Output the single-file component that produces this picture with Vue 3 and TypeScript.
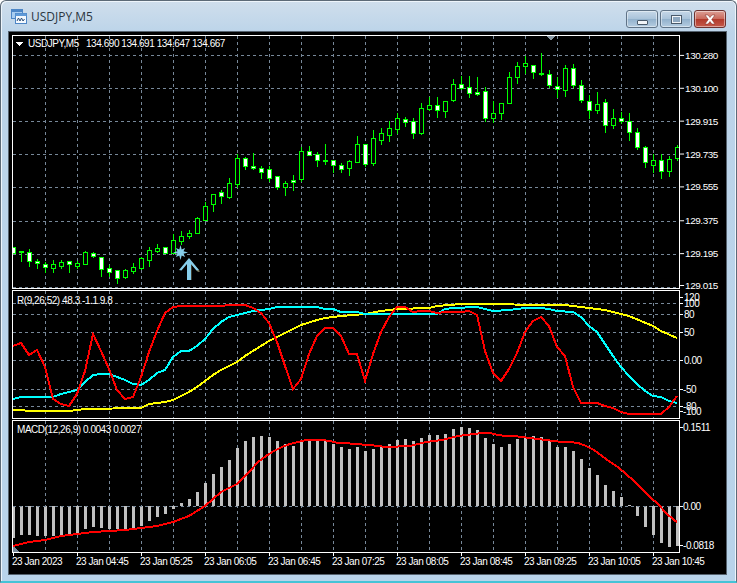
<template>
  <div class="window">
    <div class="titlebar">
      <svg class="app-icon" width="16" height="15" viewBox="0 0 16 15">
        <rect x="0.5" y="0.5" width="11" height="9" fill="#a9cdf0" stroke="#4d86c6" />
        <rect x="0.5" y="0.5" width="11" height="2.5" fill="#4d86c6" />
        <rect x="4.5" y="4.5" width="11" height="10" fill="#f4f9fe" stroke="#4d86c6" />
        <rect x="4.5" y="4.5" width="11" height="2.5" fill="#5f9ad8" />
        <path d="M6 12l1.5-3 1.5 3 1.5-3 1.5 3 1.5-2" fill="none" stroke="#2c4f78" />
      </svg>
      <span class="title">USDJPY,M5</span>
      <div class="buttons">
        <div class="btn">
          <span class="min-glyph"></span>
        </div>
        <div class="btn">
          <span class="max-glyph"></span>
        </div>
        <div class="btn btn-close">
          <svg width="14" height="11" viewBox="0 0 14 11">
            <path d="M2 1h3l2 2.5L9 1h3L8.7 5.5 12 10H9L7 7.5 5 10H2l3.3-4.5z" fill="#fff" stroke="#7d2a22" stroke-width="0.5" />
          </svg>
        </div>
      </div>
    </div>

    <div class="client">
      <!-- price pane -->
      <div class="pane pane-main">
        <svg class="plot" viewBox="13 36 666 252" shape-rendering="crispEdges">
          <line v-for="x in gridX" :key="x" :x1="x + 0.5" :x2="x + 0.5" y1="36" y2="288" class="grid" />
          <line v-for="y in priceGrid" :key="y" x1="13" x2="679" :y1="y + 0.5" :y2="y + 0.5" class="grid" />
          <g v-for="c in candleRows" :key="c.x">
            <line :x1="c.x + 0.5" :x2="c.x + 0.5" :y1="c.wickTop" :y2="c.wickBot" class="wick" />
            <rect
              :x="c.x - 1.5"
              :y="c.top + 0.5"
              width="4"
              :height="c.bot - c.top"
              :fill="c.filled ? '#fff' : '#000'"
              stroke="#00ff00"
            />
          </g>
          <text x="4" y="0" class="hidden"></text>
          <polygon points="16,42 23,42 19.5,46" fill="#fff" transform="translate(0 0)" />
          <text x="28" y="47" class="label">USDJPY,M5</text>
          <text x="86" y="47" class="label">134.690 134.691 134.647 134.667</text>
          <polygon points="546.5,36 555.5,36 551,41" fill="#8b9aa6" />
          <g shape-rendering="auto">
            <polygon :points="starPoints" fill="#87ceeb" />
            <path d="M190 259.5L200 271.5 198 272 191.5 264.5V280H190z" fill="#7d7a5c" />
            <path d="M189 258L199 270 196.5 270.5 191 264V280H187V264L181.5 270.5 179 270z" fill="#87ceeb" />
          </g>
        </svg>
        <svg class="axis" viewBox="680 35 46 255">
          <g v-for="t in priceTicks" :key="t.text">
            <line x1="680" x2="684" :y1="t.y + 0.5" :y2="t.y + 0.5" class="tick" />
            <text x="685" :y="t.y + 4" class="label">{{ t.text }}</text>
          </g>
        </svg>
      </div>

      <!-- oscillator pane -->
      <div class="pane pane-rsi">
        <svg class="plot" viewBox="13 292 666 127" shape-rendering="crispEdges">
          <line v-for="x in gridX" :key="x" :x1="x + 0.5" :x2="x + 0.5" y1="292" y2="419" class="grid" />
          <line v-for="y in rsiGrid" :key="y" x1="13" x2="679" :y1="y + 0.5" :y2="y + 0.5" class="grid" />
          <polyline :points="yellowLine" class="line yellow" />
          <polyline :points="cyanLine" class="line cyan" />
          <polyline :points="redLine" class="line red" />
          <text x="17" y="305" class="label">R(9,26,52) 48.3 -1.1 9.8</text>
        </svg>
        <svg class="axis" viewBox="680 291 46 129">
          <g v-for="t in rsiTicks" :key="t.text">
            <line x1="680" x2="683" :y1="t.line + 0.5" :y2="t.line + 0.5" class="tick" />
            <text :x="t.x" :y="t.y + 4" class="label">{{ t.text }}</text>
          </g>
        </svg>
      </div>

      <!-- histogram pane -->
      <div class="pane pane-macd">
        <svg class="plot" viewBox="13 422 666 131" shape-rendering="crispEdges">
          <line v-for="x in gridX" :key="x" :x1="x + 0.5" :x2="x + 0.5" y1="422" y2="553" class="grid" />
          <rect
            v-for="b in macdBars"
            :key="b.x"
            :x="b.x - 1"
            :y="b.y"
            width="3"
            :height="b.h"
            fill="#c0c0c0"
          />
          <line x1="13" x2="679" y1="507.5" y2="507.5" class="grid" />
          <polygon points="13,547 13,553 19,553" fill="#778899" />
          <polyline :points="signalLine" class="line red" />
          <text x="17" y="434" class="label">MACD(12,26,9) 0.0043 0.0027</text>
        </svg>
        <svg class="axis" viewBox="680 421 46 133">
          <g v-for="t in macdTicks" :key="t.text">
            <line x1="680" x2="683" :y1="t.y + 0.5" :y2="t.y + 0.5" class="tick" />
            <text x="683" :y="t.y + 4" class="label">{{ t.text }}</text>
          </g>
        </svg>
      </div>

      <!-- time scale -->
      <svg class="time-axis" viewBox="9 554 717 20">
        <g v-for="(t, i) in timeLabels" :key="t">
          <line :x1="13 + i * 64 + 0.5" :x2="13 + i * 64 + 0.5" y1="554" y2="557" class="tick" />
          <text :x="12 + i * 64" y="566" class="label">23 Jan {{ t }}</text>
        </g>
      </svg>
    </div>
  </div>
</template>

<script setup lang="ts">
import { computed } from 'vue'

// one candle every 8px starting at x=13: bodyTop, bodyBottom, wickTop, wickBottom, filled
const candles: [number, number, number, number, number][] = [
  [247, 253, 247, 253, 1], [251, 252, 251, 261, 1], [252, 261, 249, 266, 1], [261, 263, 259, 268, 1],
  [264, 267, 262, 272, 1], [264, 268, 260, 272, 0], [262, 266, 260, 268, 0], [261, 264, 261, 272, 1],
  [263, 266, 261, 268, 0], [252, 264, 251, 264, 0], [253, 256, 252, 257, 1], [257, 269, 257, 276, 1],
  [268, 272, 265, 276, 1], [270, 278, 270, 283, 1], [270, 277, 269, 278, 0], [267, 271, 263, 273, 0],
  [258, 268, 257, 269, 0], [250, 260, 247, 266, 0], [248, 251, 244, 252, 0], [247, 253, 247, 253, 1],
  [240, 253, 234, 253, 0], [236, 241, 231, 244, 0], [233, 236, 230, 238, 0], [218, 233, 217, 233, 0],
  [206, 220, 202, 220, 0], [194, 204, 194, 211, 0], [192, 196, 190, 203, 1], [183, 197, 178, 198, 0],
  [158, 184, 154, 187, 0], [158, 166, 157, 169, 1], [166, 168, 153, 169, 1], [168, 172, 166, 178, 1],
  [169, 178, 166, 181, 1], [176, 187, 176, 189, 1], [183, 187, 181, 195, 0], [180, 182, 175, 190, 1],
  [151, 179, 147, 181, 0], [151, 155, 146, 155, 1], [154, 160, 152, 166, 1], [160, 161, 144, 164, 1],
  [160, 165, 160, 172, 1], [165, 169, 163, 172, 1], [161, 168, 160, 175, 0], [144, 162, 136, 162, 0],
  [144, 164, 144, 166, 1], [138, 163, 130, 165, 0], [133, 140, 128, 144, 0], [128, 135, 121, 141, 0],
  [118, 129, 113, 133, 0], [119, 122, 117, 126, 1], [121, 133, 118, 138, 1], [108, 133, 103, 134, 0],
  [105, 109, 97, 110, 0], [105, 110, 97, 117, 1], [101, 111, 101, 117, 0], [84, 100, 79, 101, 0],
  [84, 88, 76, 89, 1], [87, 93, 76, 97, 1], [92, 94, 77, 95, 1], [91, 118, 87, 121, 1],
  [113, 118, 101, 122, 0], [103, 113, 103, 119, 0], [77, 103, 72, 103, 0], [66, 77, 62, 83, 0],
  [63, 66, 56, 73, 0], [65, 72, 65, 78, 1], [73, 74, 53, 75, 1], [74, 85, 70, 87, 1],
  [86, 89, 77, 97, 1], [68, 90, 65, 96, 0], [68, 85, 64, 87, 1], [85, 100, 80, 102, 1],
  [101, 110, 95, 118, 1], [104, 110, 92, 113, 0], [102, 125, 99, 132, 1], [118, 125, 109, 128, 0],
  [118, 121, 112, 123, 1], [121, 132, 113, 140, 1], [132, 147, 128, 149, 1], [147, 162, 146, 167, 1],
  [160, 165, 154, 172, 0], [160, 171, 154, 178, 1], [159, 171, 156, 176, 0], [147, 158, 145, 160, 0],
]

const candleRows = computed(() =>
  candles.map((c, i) => ({
    x: 13 + i * 8,
    top: c[0],
    bot: c[1],
    wickTop: c[2],
    wickBot: c[3] + 1,
    filled: c[4] === 1,
  })),
)

const gridX = Array.from({ length: 20 }, (_, i) => 45 + i * 32)
const priceGrid = [55, 88, 121, 154, 187, 221, 254, 287]
const rsiGrid = [304, 315, 333, 361, 390, 407]

const priceTicks = [
  { text: '130.280', y: 55 },
  { text: '130.100', y: 88 },
  { text: '129.915', y: 121 },
  { text: '129.735', y: 154 },
  { text: '129.555', y: 187 },
  { text: '129.375', y: 221 },
  { text: '129.195', y: 254 },
  { text: '129.015', y: 286 },
]

const rsiTicks = [
  { text: '120', x: 684, y: 298, line: 298 },
  { text: '100', x: 684, y: 304, line: 304 },
  { text: '80', x: 684, y: 315, line: 315 },
  { text: '50', x: 684, y: 333, line: 333 },
  { text: '0.00', x: 684, y: 361, line: 361 },
  { text: '-50', x: 683, y: 390, line: 390 },
  { text: '-80', x: 683, y: 407, line: 407 },
  { text: '-100', x: 683, y: 412, line: 412 },
]

const macdTicks = [
  { text: '0.1511', y: 428 },
  { text: '0.00', y: 507 },
  { text: '-0.0818', y: 546 },
]

const timeLabels = ['2023', '04:45', '05:25', '06:05', '06:45', '07:25', '08:05', '08:45', '09:25', '10:05', '10:45']

const redLine =
  '13,347 21,344 29,356 37,351 45,368 53,400 61,405 69,407 77,395 85,372 93,335 101,352 109,370 117,391 125,400 133,398 141,378 149,353 157,332 165,314 173,308 181,307 221,307 229,306 245,306 253,309 261,314 269,324 277,343 285,367 293,390 301,380 309,355 317,337 325,329 333,329 341,337 349,355 357,355 365,382 373,355 381,333 389,318 397,308 405,308 413,313 421,312 429,312 437,314 445,313 461,313 469,312 477,316 485,352 493,374 501,382 509,370 517,354 525,333 533,322 541,318 549,327 557,348 565,357 573,388 581,404 597,404 605,407 613,409 621,413 629,415 661,415 669,408 677,397'
const cyanLine =
  '13,400 21,398 53,398 61,395 69,393 77,391 85,383 93,376 101,375 109,375 117,378 125,381 133,385 141,386 149,381 157,374 165,371 173,358 181,352 189,352 197,347 205,340 213,330 221,323 229,318 237,316 245,314 253,312 269,310 277,308 309,308 317,308 325,310 333,310 341,313 357,313 365,315 437,315 445,310 453,309 477,308 485,310 493,312 509,311 517,310 525,309 541,309 549,310 557,312 573,313 581,318 589,327 597,333 605,345 613,357 621,368 629,377 637,385 645,392 653,397 661,398 669,402 677,404'
const yellowLine =
  '13,411 37,412 69,412 77,411 85,410 141,409 149,405 165,403 173,401 189,393 197,388 205,382 213,376 221,371 229,367 237,363 245,357 253,352 269,342 285,334 301,326 317,321 325,319 341,317 365,315 381,312 397,310 429,309 437,307 461,305 565,306 581,308 605,311 629,317 653,327 661,332 677,339'
const signalLine =
  '13,547 29,543 45,541 61,537 77,535 93,533 109,532 125,531 141,529 157,527 173,523 189,517 205,507 221,493 237,485 250,472 258,463 266,457 274,452 282,448 290,445 298,443 306,441 322,441 330,442 338,444 346,444 354,445 370,446 378,447 386,448 394,448 402,447 410,447 418,445 426,443 434,442 442,441 450,439 458,437 466,436 474,435 482,434 490,434 498,436 506,437 514,437 522,438 530,439 538,440 546,441 554,442 562,443 570,443 578,444 586,447 594,451 602,457 610,463 618,468 626,475 634,482 642,490 650,498 658,505 666,514 674,521 677,523'

// top of each bar (or bottom when under the zero line), 8px apart from x=13
const macdEnds = [
  539, 536, 536, 537, 537, 537, 536, 535, 534, 530, 528, 529, 530, 530, 530, 529, 527, 522, 518, 515, 510,
  504, 500, 493, 484, 475, 468, 461, 449, 442, 438, 437, 438, 442, 445, 447, 442, 440, 442, 442, 445, 448,
  450, 448, 452, 450, 448, 445, 441, 440, 442, 439, 436, 436, 435, 430, 428, 429, 431, 439, 445, 448, 445,
  440, 438, 437, 438, 442, 448, 448, 452, 460, 469, 476, 486, 492, 498, 506, 517, 528, 536, 544, 548, 547,
]
const macdBars = computed(() =>
  macdEnds.map((end, i) => ({
    x: 13 + i * 8,
    y: Math.min(end, 507),
    h: Math.abs(end - 507),
  })),
)

// eight spiked star under the arrow
const starPoints = computed(() => {
  const pts: string[] = []
  for (let i = 0; i < 16; i++) {
    const r = i % 2 === 0 ? (i % 4 === 0 ? 7.5 : 6.5) : 3.2
    const a = (i * Math.PI) / 8 - Math.PI / 2
    pts.push(`${(180.5 + r * Math.cos(a)).toFixed(1)},${(252.5 + r * Math.sin(a)).toFixed(1)}`)
  }
  return pts.join(' ')
})
</script>

<style scoped>
.window {
  width: 737px;
  height: 583px;
  box-sizing: border-box;
  display: flex;
  flex-direction: column;
  background: linear-gradient(180deg, #cfdeec 0, #bcd4e9 32px, #b8d3ea 100%);
  border: 1px solid #5c6a77;
  border-bottom: 2px solid #45c3d6;
  border-radius: 6px 6px 0 0;
  box-shadow: inset 1px 1px 0 #eef5fb, inset -1px 0 0 #eef5fb;
  overflow: hidden;
}
.titlebar {
  height: 30px;
  flex: none;
  display: flex;
  align-items: center;
  padding: 0 10px 0 10px;
}
.app-icon {
  margin: 0 4px 0 0;
}
.title {
  font-family: "Open Sans", sans-serif;
  font-size: 12px;
  color: #2b3641;
}
.buttons {
  margin-left: auto;
  display: flex;
  gap: 2px;
  align-self: flex-start;
  margin-top: 9px;
}
.btn {
  width: 32px;
  height: 18px;
  box-sizing: border-box;
  border: 1px solid #5f7387;
  border-radius: 3px;
  background: linear-gradient(180deg, #c6d8e8 0, #a9c3da 50%, #92b1cc 52%, #b5cde1 100%);
  box-shadow: inset 0 0 0 1px rgba(255, 255, 255, 0.45);
  display: flex;
  align-items: center;
  justify-content: center;
}
.btn-close {
  border-color: #6d3230;
  background: linear-gradient(180deg, #dc9f95 0, #c9685a 50%, #b23a2b 52%, #c5594a 100%);
}
.min-glyph {
  width: 11px;
  height: 5px;
  margin-top: 6px;
  box-sizing: border-box;
  border: 1px solid #4a5a6a;
  border-radius: 1px;
  background: #f2f5f8;
}
.max-glyph {
  width: 11px;
  height: 9px;
  box-sizing: border-box;
  border: 2px solid #f2f5f8;
  outline: 1px solid #4a5a6a;
  outline-offset: -1px;
  background: #8ea8c0;
}
.client {
  flex: none;
  width: 717px;
  height: 542px;
  margin: 1px 0 0 8px;
  box-sizing: border-box;
  background: #000;
  outline: 1px solid #55626e;
  box-shadow: 1px 1px 0 #eef5fb;
  padding: 3px 0 0 3px;
  display: flex;
  flex-direction: column;
}
.pane {
  display: flex;
  flex: none;
  margin-bottom: 1px;
}
.plot {
  width: 666px;
  box-sizing: content-box;
  border: 1px solid #fff;
  background: #000;
  overflow: hidden;
  display: block;
}
.pane-main .plot {
  height: 252px;
}
.pane-rsi .plot {
  height: 127px;
}
.pane-macd .plot {
  height: 131px;
  margin-bottom: 0;
}
.pane-macd {
  margin-bottom: 0;
}
.axis {
  width: 46px;
  display: block;
  overflow: visible;
}
.pane-main .axis {
  height: 254px;
}
.pane-rsi .axis {
  height: 129px;
}
.pane-macd .axis {
  height: 133px;
}
.time-axis {
  width: 717px;
  height: 20px;
  margin-left: -3px;
  display: block;
  flex: none;
}
.grid {
  stroke: #778899;
  stroke-width: 1;
  stroke-dasharray: 3 3;
}
.wick {
  stroke: #00ff00;
  stroke-width: 1;
}
.tick {
  stroke: #fff;
  stroke-width: 1;
}
.line {
  fill: none;
  stroke-width: 2;
}
.red {
  stroke: #ff0000;
}
.cyan {
  stroke: #00ffff;
}
.yellow {
  stroke: #ffff00;
}
.label {
  font-family: "Liberation Sans", Arial, sans-serif;
  font-size: 10px;
  letter-spacing: -0.45px;
  fill: #fff;
}
.hidden {
  display: none;
}
</style>
